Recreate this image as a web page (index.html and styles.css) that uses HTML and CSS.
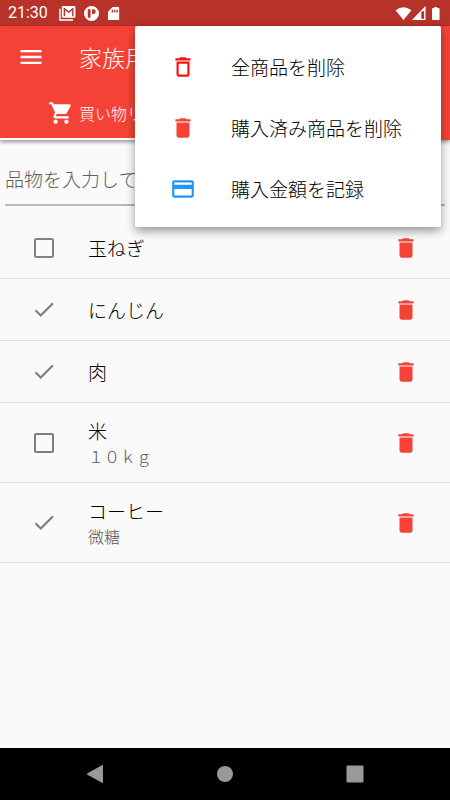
FILE: index.html
```html
<!DOCTYPE html>
<html lang="ja">
<head>
<meta charset="utf-8">
<meta name="viewport" content="width=device-width, initial-scale=1">
<title>買い物リスト</title>
<link rel="stylesheet" href="styles.css">
</head>
<body>
<svg class="sprite" aria-hidden="true">
  <symbol id="trash" viewBox="0 0 24 24"><path d="M6 19c0 1.1.9 2 2 2h8c1.1 0 2-.9 2-2V7H6v12zM19 4h-3.5l-1-1h-5l-1 1H5v2h14V4z"/></symbol>
  <symbol id="trash-outline" viewBox="0 0 24 24"><path d="M6 19c0 1.1.9 2 2 2h8c1.1 0 2-.9 2-2V7H6v12zM8 9h8v10H8V9zm7.5-5l-1-1h-5l-1 1H5v2h14V4z"/></symbol>
</svg>

<div class="status">
  <time class="clock">21:30</time>
  <svg class="status-icon" viewBox="0 0 18 16"><path d="M1 3v12h14" fill="none" stroke="currentColor" stroke-width="1.5"/><path fill-rule="evenodd" d="M4 0h12.500q1 0 1 1v10.500q0 1-1 1H4q-1 0-1-1V1q0-1 1-1zM5 2v9h1.500V4.500l3.750 3 3.750-3V11h1.500V2h-1l-4.250 3.500L6 2z"/></svg>
  <svg class="status-icon" viewBox="0 0 16 16"><path fill-rule="evenodd" d="M8 0a8 8 0 1 1 0 16A8 8 0 0 1 8 0zM4 3.500v9h3v-9zM8.500 3.500v5H10a2.500 2.500 0 0 0 0-5z"/></svg>
  <svg class="status-icon" viewBox="1 0 14 16"><path fill-rule="evenodd" d="M7 1h6q1 0 1 1v12q0 1-1 1H3q-1 0-1-1V6zM6 4v3h1.500V4zM8.500 4v3H10V4zM11 4v3h1.500V4z"/></svg>
  <span class="spacer"></span>
  <svg class="signal" viewBox="0 0 48 16"><path d="M0 4.500Q8.500-2 17 4.500L8.500 15zM47 3v11q0 1-1 1h-6q-1 0-1-1V3q0-1 1-1h1.500V1h3v1H46q1 0 1 1z"/><path fill-rule="evenodd" d="M17.500 15L32 0v15zM27.500 6.500V13.500H30.500V5.500H28.500z"/></svg>
</div>

<header class="appbar">
  <div class="toolbar">
    <button class="icon-button" aria-label="メニュー"><svg class="menu-icon" viewBox="0 0 24 24"><path d="M3 18h18v-2H3v2zm0-5h18v-2H3v2zm0-7v2h18V6H3z"/></svg></button>
    <h1 class="title">家族用</h1>
  </div>
  <nav class="tabs">
    <a class="tab active" href="#list"><svg class="icon" viewBox="0 0 24 24"><path d="M7 18c-1.100 0-1.990.9-1.990 2S5.900 22 7 22s2-.9 2-2-.9-2-2-2zM1 2v2h2l3.600 7.590-1.350 2.450c-.16.28-.25.61-.25.96 0 1.100.9 2 2 2h12v-2H7.420c-.14 0-.25-.11-.25-.25l.03-.12.9-1.630h7.450c.75 0 1.410-.41 1.750-1.030l3.580-6.490A1 1 0 0 0 20 4H5.210l-.94-2H1zm16 16c-1.100 0-1.990.9-1.990 2s.89 2 1.990 2 2-.9 2-2-.9-2-2-2z"/></svg>買い物リスト</a>
  </nav>

  <div class="popup" role="menu">
    <button class="popup-item" role="menuitem"><svg class="icon outline"><use href="#trash-outline"/></svg>全商品を削除</button>
    <button class="popup-item" role="menuitem"><svg class="icon red"><use href="#trash"/></svg>購入済み商品を削除</button>
    <button class="popup-item" role="menuitem"><svg class="icon blue" viewBox="0 0 24 24"><path d="M20 4H4c-1.110 0-1.990.89-1.990 2L2 18c0 1.110.89 2 2 2h16c1.110 0 2-.89 2-2V6c0-1.110-.89-2-2-2zm0 14H4v-6h16v6zm0-10H4V6h16v2z"/></svg>購入金額を記録</button>
  </div>
</header>

<main class="content" id="list">
  <input class="entry" type="text" aria-label="品物" placeholder="品物を入力して">
  <ul class="items">
    <li class="item"><input class="check" type="checkbox" id="i1"><label class="name" for="i1">玉ねぎ</label><button class="icon-button red" aria-label="削除"><svg class="icon"><use href="#trash"/></svg></button></li>
    <li class="item"><input class="check" type="checkbox" id="i2" checked><label class="name" for="i2">にんじん</label><button class="icon-button red" aria-label="削除"><svg class="icon"><use href="#trash"/></svg></button></li>
    <li class="item"><input class="check" type="checkbox" id="i3" checked><label class="name" for="i3">肉</label><button class="icon-button red" aria-label="削除"><svg class="icon"><use href="#trash"/></svg></button></li>
    <li class="item tall"><input class="check" type="checkbox" id="i4"><label class="name" for="i4">米<span class="note">１０ｋｇ</span></label><button class="icon-button red" aria-label="削除"><svg class="icon"><use href="#trash"/></svg></button></li>
    <li class="item tall"><input class="check" type="checkbox" id="i5" checked><label class="name" for="i5">コーヒー<span class="note">微糖</span></label><button class="icon-button red" aria-label="削除"><svg class="icon"><use href="#trash"/></svg></button></li>
  </ul>
</main>

<nav class="system">
  <button class="icon-button" aria-label="戻る"><svg class="system-icon" viewBox="0 0 18 18"><path d="M1.500 8.200L16 .2q1-.4 1 .6v16.400q0 1-1 .6L1.500 9.800q-1-.8 0-1.600z"/></svg></button>
  <button class="icon-button" aria-label="ホーム"><svg class="system-icon" viewBox="0 0 18 18"><circle cx="9" cy="9" r="8"/></svg></button>
  <button class="icon-button" aria-label="履歴"><svg class="system-icon" viewBox="0 0 18 18"><rect x=".5" y=".5" width="17" height="17" rx="1"/></svg></button>
</nav>
</body>
</html>
```
FILE: styles.css
```css
* {
  box-sizing: border-box;
}

body {
  margin: 0;
  min-height: 100vh;
  display: flex;
  flex-direction: column;
  background: #fafafa;
  color: #000;
  font-family: "Noto Sans CJK JP", sans-serif;
  font-size: 19px;
  font-weight: 300;
  line-height: 26px;
}

button,
input {
  font: inherit;
  color: inherit;
  margin: 0;
}

button {
  padding: 0;
  border: 0;
  background: none;
}

svg {
  display: block;
  flex: none;
  fill: currentColor;
}

.sprite {
  position: absolute;
  width: 0;
  height: 0;
}

.icon {
  width: 26px;
  height: 26px;
}

.red {
  color: #f44336;
}

.outline {
  color: #f81414;
}

.blue {
  color: #2196f3;
}

.status {
  display: flex;
  align-items: center;
  height: 26px;
  padding: 0 8px;
  background: #b73229;
  color: #fff;
}

.clock {
  margin-right: 11px;
  font-family: Roboto, sans-serif;
  font-size: 16px;
  font-weight: 400;
  line-height: 28px;
}

.status-icon {
  height: 15px;
  margin-right: 8px;
}

.spacer {
  flex: 1;
}

.signal {
  width: 48px;
  height: 15px;
}

.appbar {
  position: relative;
  background: #f44336;
  color: #fff;
  box-shadow: 0 2px 4px rgba(0, 0, 0, 0.4);
}

.toolbar {
  display: flex;
  align-items: center;
  gap: 34px;
  height: 62px;
  padding-left: 17px;
}

.menu-icon {
  width: 28px;
  height: 28px;
}

.title {
  margin: 0;
  font-size: 23px;
  font-weight: 300;
}

.tabs {
  display: grid;
  grid-template-columns: 1fr 1fr;
}

.tab {
  display: flex;
  align-items: center;
  justify-content: center;
  gap: 5px;
  height: 52px;
  padding-right: 2px;
  border-bottom: 2px solid transparent;
  color: inherit;
  font-size: 16px;
  font-weight: 300;
  text-decoration: none;
}

.active {
  border-color: #fff;
}

.popup {
  position: absolute;
  top: 0;
  right: 9px;
  width: 68%;
  padding: 10px 0 8px;
  border-radius: 2px;
  background: #fff;
  color: #000;
  box-shadow: 0 4px 10px rgba(0, 0, 0, 0.4);
}

.popup-item {
  display: flex;
  align-items: center;
  gap: 35px;
  width: 100%;
  height: 61px;
  padding-left: 35px;
}

.content {
  flex: 1;
  padding-top: 12px;
}

.entry {
  display: block;
  width: calc(100% - 10px);
  height: 54px;
  margin: 0 5px 11px;
  padding: 0;
  border: 0;
  border-bottom: 2px solid #b8b8b8;
  outline: 0;
  background: none;
}

.entry::placeholder {
  color: #606060;
  opacity: 1;
}

.items {
  margin: 0;
  padding: 0;
  list-style: none;
}

.item {
  display: flex;
  align-items: center;
  height: 62px;
  padding: 0 31px;
  border-bottom: 1px solid #dedede;
}

.tall {
  height: 80px;
}

.check {
  appearance: none;
  width: 20px;
  height: 20px;
  margin: 0 34px 0 3px;
  border: 2px solid #808080;
  border-radius: 2px;
}

.check:checked {
  border: 0;
}

.check:checked::before {
  content: "";
  display: block;
  width: 26px;
  height: 26px;
  margin: -3px;
  background: #808080;
  clip-path: polygon(37.5% 67.4%, 20.1% 50%, 14.2% 55.9%, 37.5% 79.2%, 87.5% 29.2%, 81.6% 23.3%);
}

.name {
  flex: 1;
}

.note {
  display: block;
  color: #555;
  font-size: 16px;
  line-height: 24px;
}

.system {
  display: grid;
  grid-template-columns: repeat(3, 1fr);
  height: 52px;
  padding: 0 30px;
  background: #000;
  color: #999;
}

.system .icon-button {
  display: flex;
  align-items: center;
  justify-content: center;
}

.system-icon {
  width: 18px;
  height: 18px;
}
```
